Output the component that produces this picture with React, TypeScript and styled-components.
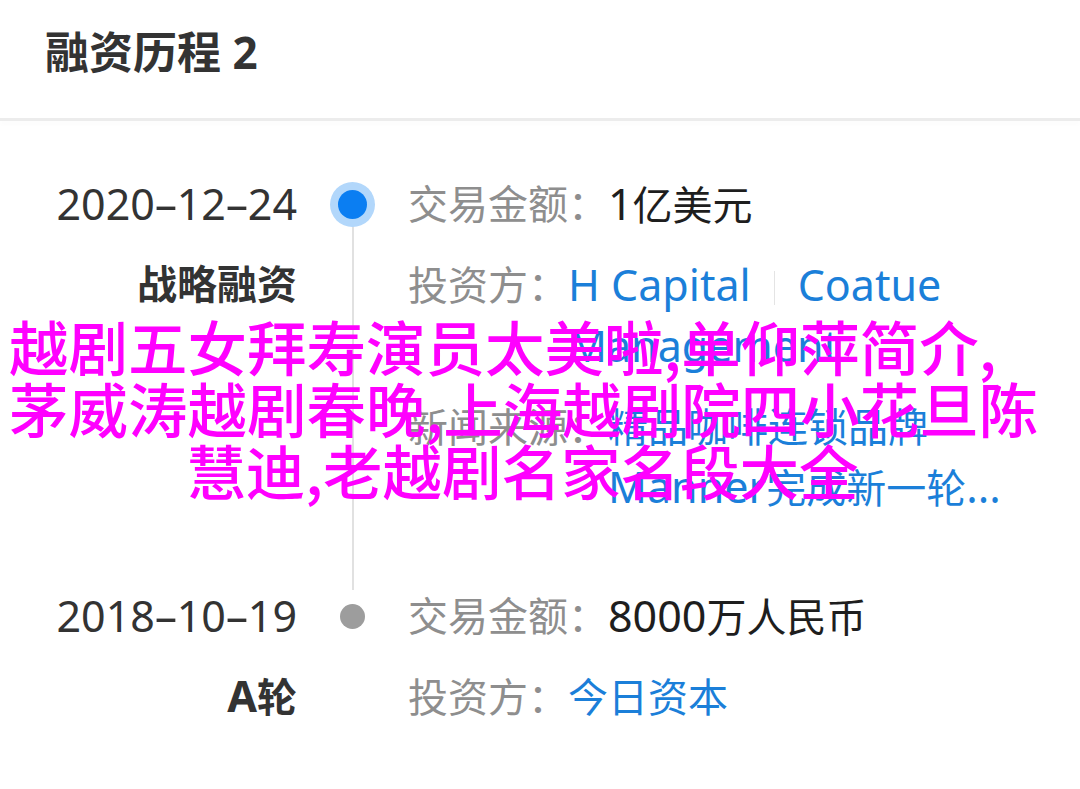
import React from "react";
import styled, { createGlobalStyle } from "styled-components";

const GlobalStyle = createGlobalStyle`
  html, body { margin: 0; padding: 0; background: #ffffff; }
  body { font-family: "Noto Sans", "Noto Sans CJK SC", sans-serif; }
`;

const Page = styled.div`
  position: relative;
  width: 1080px;
  height: 789px;
  overflow: hidden;
  background: #ffffff;
  font-family: "Noto Sans", "Noto Sans CJK SC", sans-serif;
`;

const Header = styled.header`
  height: 118px;
  box-sizing: border-box;
  display: flex;
  align-items: center;
  padding: 0 0 18px 45px;
`;

const Title = styled.h1`
  margin: 0;
  font-size: 44px;
  font-weight: 700;
  color: #333333;
`;

const Divider = styled.div`
  height: 3px;
  background: #ececec;
  box-shadow: 0 3px 5px rgba(0, 0, 0, 0.025);
`;

const Timeline = styled.div`
  padding-top: 53px;
`;

const Entry = styled.section`
  display: grid;
  grid-template-columns: 297px 111px 1fr;
`;

const DateCol = styled.div`
  display: flex;
  flex-direction: column;
  align-items: flex-end;
  gap: 20px;
`;

const DateText = styled.div`
  font-size: 43px;
  line-height: 60px;
  color: #333333;
  white-space: nowrap;
`;

const Dash = styled.span`
  display: inline-block;
  margin: 0 4px;
  transform: scaleX(1.8);
`;

const RoundName = styled.div`
  font-size: 40px;
  line-height: 60px;
  font-weight: 700;
  color: #333333;
`;

const Rail = styled.div`
  display: flex;
  flex-direction: column;
  align-items: center;
`;

const Dot = styled.div<{ $active?: boolean }>`
  position: relative;
  z-index: 1;
  flex-shrink: 0;
  border-radius: 50%;
  width: ${(p) => (p.$active ? 29 : 25)}px;
  height: ${(p) => (p.$active ? 29 : 25)}px;
  margin-top: ${(p) => (p.$active ? 15.5 : 17.5)}px;
  background: ${(p) => (p.$active ? "#0b7ef2" : "#9d9d9d")};
  box-shadow: ${(p) => (p.$active ? "0 0 0 8px #b2d7fb" : "none")};
`;

const RailLine = styled.div`
  flex: 1;
  width: 2px;
  margin-bottom: -4px;
  background: #e1e1e1;
`;

const Content = styled.div<{ $gap: number }>`
  display: flex;
  flex-direction: column;
  gap: 20px;
  padding-right: 80px;
  padding-bottom: ${(p) => p.$gap}px;
`;

const Field = styled.div`
  display: flex;
  font-size: 40px;
  line-height: 60px;
`;

const Label = styled.span`
  flex-shrink: 0;
  color: #8e8e8e;
`;

const Value = styled.span<{ $link?: boolean }>`
  flex: 1;
  min-width: 0;
  color: ${(p) => (p.$link ? "#1b7fd9" : "#1e1e1e")};
`;

const Latin = styled.span`
  font-size: 43px;
`;

const NoWrap = styled.span`
  white-space: nowrap;
`;

const Sep = styled.span`
  display: inline-block;
  width: 1px;
  height: 34px;
  margin: 0 23px;
  vertical-align: -4px;
  background: #e4e4e4;
`;

const Overlay = styled.div`
  position: absolute;
  top: 314px;
  left: 9px;
  width: 1027px;
  font-family: "Noto Sans CJK SC", sans-serif;
  font-size: 59.5px;
  line-height: 62px;
  font-weight: 500;
  color: #ff00ff;
  pointer-events: none;
`;

const OverlayLine = styled.div<{ $align: "left" | "center" }>`
  text-align: ${(p) => p.$align};
  white-space: nowrap;
`;

function DateLabel({ value }: { value: string }) {
  const parts = value.split("-");
  return (
    <DateText>
      {parts.map((p, i) => (
        <React.Fragment key={i}>
          {i > 0 && <Dash>-</Dash>}
          {p}
        </React.Fragment>
      ))}
    </DateText>
  );
}

export default function App() {
  return (
    <Page>
      <GlobalStyle />
      <Header>
        <Title>融资历程 2</Title>
      </Header>
      <Divider />
      <Timeline>
        <Entry>
          <DateCol>
            <DateLabel value="2020-12-24" />
            <RoundName>战略融资</RoundName>
          </DateCol>
          <Rail>
            <Dot $active />
            <RailLine />
          </Rail>
          <Content $gap={68}>
            <Field>
              <Label>交易金额：</Label>
              <Value>
                <Latin>1</Latin>亿美元
              </Value>
            </Field>
            <Field>
              <Label>投资方：</Label>
              <Value $link>
                <Latin>H Capital</Latin>
                <Sep />
                <Latin>Coatue Management</Latin>
              </Value>
            </Field>
            <Field>
              <Label>新闻来源：</Label>
              <Value $link>
                精品咖啡连锁品牌
                <NoWrap>
                  <Latin>Manner</Latin>完成新一轮<Latin>...</Latin>
                </NoWrap>
              </Value>
            </Field>
          </Content>
        </Entry>
        <Entry>
          <DateCol>
            <DateLabel value="2018-10-19" />
            <RoundName>
              <Latin>A</Latin>轮
            </RoundName>
          </DateCol>
          <Rail>
            <Dot />
          </Rail>
          <Content $gap={0}>
            <Field>
              <Label>交易金额：</Label>
              <Value>
                <Latin>8000</Latin>万人民币
              </Value>
            </Field>
            <Field>
              <Label>投资方：</Label>
              <Value $link>今日资本</Value>
            </Field>
          </Content>
        </Entry>
      </Timeline>
      <Overlay>
        <OverlayLine $align="left">越剧五女拜寿演员太美啦,单仰萍简介,</OverlayLine>
        <OverlayLine $align="center">茅威涛越剧春晚,上海越剧院四小花旦陈</OverlayLine>
        <OverlayLine $align="center">慧迪,老越剧名家名段大全</OverlayLine>
      </Overlay>
    </Page>
  );
}
